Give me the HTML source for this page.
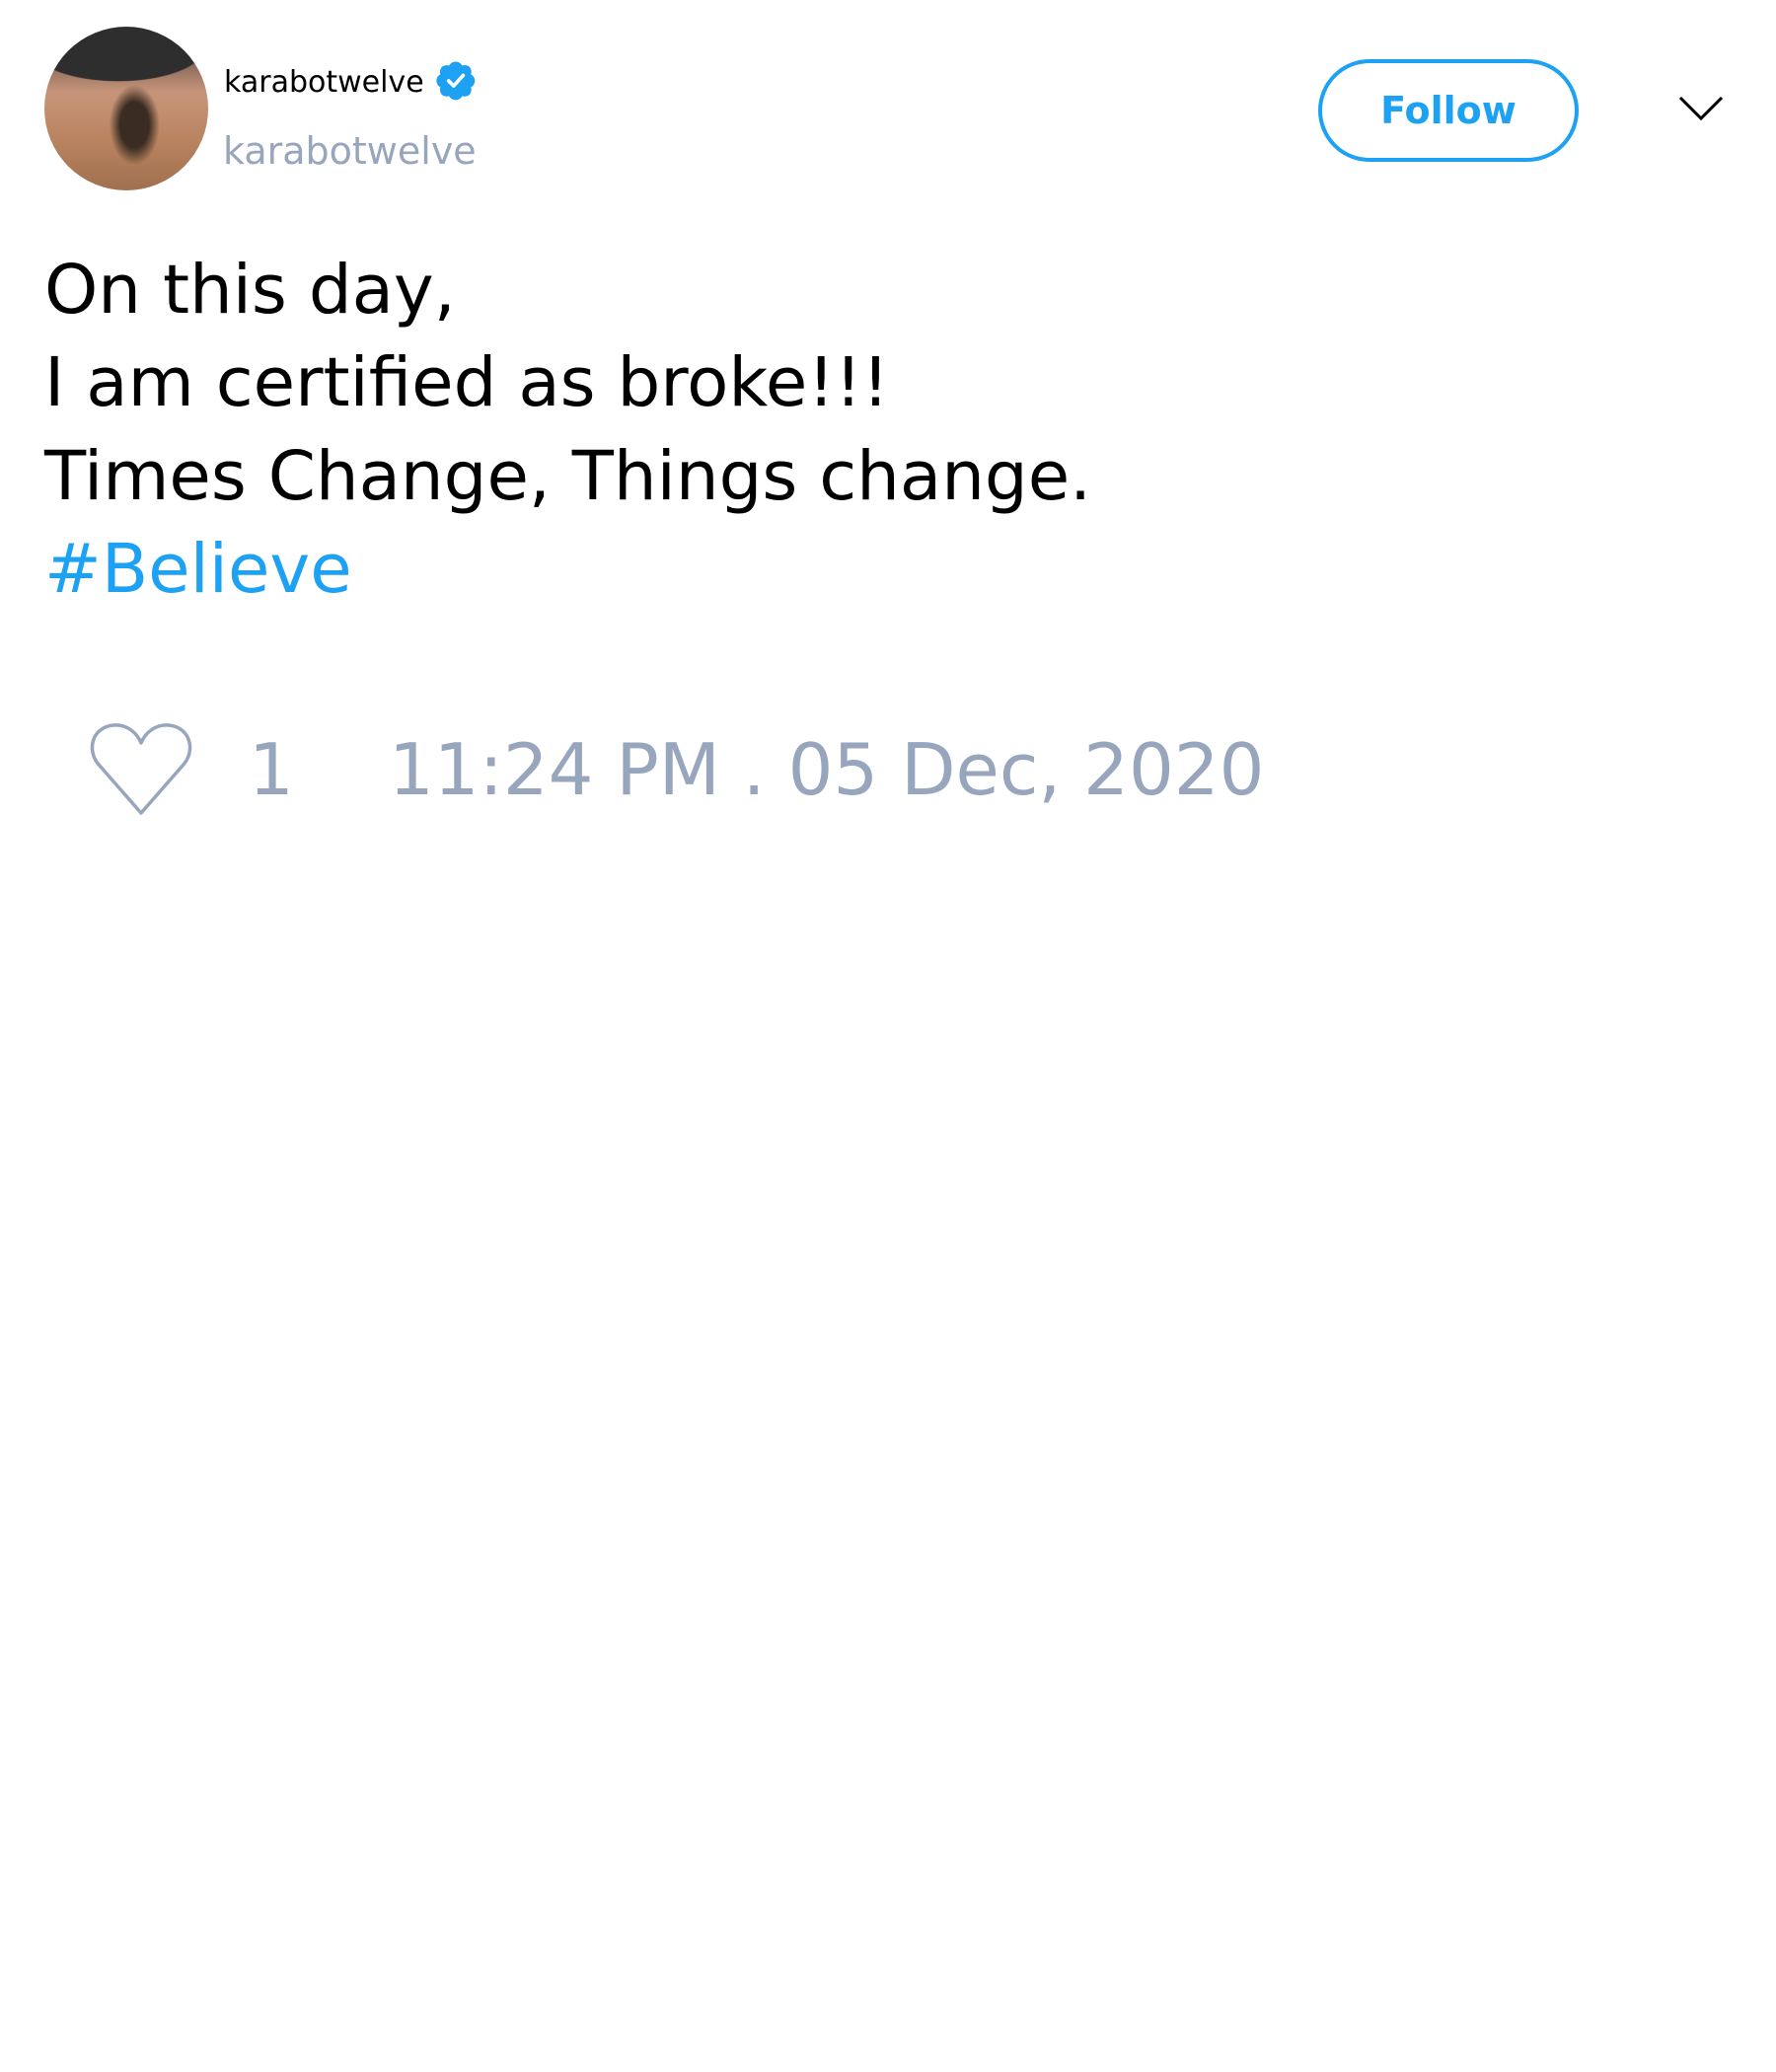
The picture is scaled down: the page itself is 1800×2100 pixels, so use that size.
<!DOCTYPE html>
<html><head><meta charset="utf-8"><style>
html,body{margin:0;padding:0;background:#fff;width:1800px;height:2100px;overflow:hidden;font-family:"DejaVu Sans","Liberation Sans",sans-serif;}
.a{position:absolute;white-space:nowrap;}
.av{position:absolute;left:45px;top:27px;width:166px;height:166px;border-radius:50%;overflow:hidden;
background:radial-gradient(ellipse 75% 30% at 45% 12%,#2e2e2e 70%,transparent 72%),
radial-gradient(ellipse 22% 35% at 55% 60%,#3a2c22 40%,transparent 70%),
linear-gradient(180deg,#3a3232 0%,#c7957a 40%,#b9835f 70%,#a0704f 100%);}
.t{font-size:69px;color:#000;left:45px;}
</style></head><body>
<div class="av"></div>
<div class="a" style="left:227px;top:64px;font-size:30px;color:#000;line-height:40px;">karabotwelve</div>
<svg class="a" style="left:440px;top:59px" width="44" height="44" viewBox="0 0 24 24"><path fill="#1da1f2" d="M22.5 12.5c0-1.58-.88-2.950-2.16-3.6.46-1.4.2-2.97-.81-4.03-1.06-1.01-2.63-1.27-4.03-.81C14.85 2.79 13.48 1.9 11.9 1.9S8.95 2.8 8.3 4.08c-1.4-.46-2.97-.2-4.030.81-1.01 1.06-1.27 2.63-.81 4.03C2.19 9.57 1.3 10.94 1.3 12.5s.89 2.93 2.17 3.58c-.46 1.4-.2 2.970.81 4.03 1.06 1.01 2.63 1.27 4.030.81.65 1.28 2.02 2.18 3.59 2.18s2.95-.89 3.6-2.17c1.4.46 2.97.2 4.03-.81 1.01-1.06 1.27-2.63.81-4.03 1.28-.65 2.16-2.02 2.16-3.59z"/><path fill="none" stroke="#fff" stroke-width="2" stroke-linecap="round" stroke-linejoin="round" d="M8 12.5l2.8 2.8L16 9.5"/></svg>
<div class="a" style="left:226px;top:128px;font-size:38px;color:#97a5bd;line-height:50px;">karabotwelve</div>
<div class="a" style="left:1336px;top:60px;width:256px;height:96px;border:4px solid #1da1f2;border-radius:52px;color:#1da1f2;font-weight:bold;font-size:38px;line-height:96px;text-align:center;">Follow</div>
<svg class="a" style="left:1700px;top:94px" width="48" height="32" viewBox="0 0 48 32"><path d="M3 5L24 26L45 5" fill="none" stroke="#000" stroke-width="3"/></svg>
<div class="a t" style="top:247px;line-height:94px;">On this day,</div>
<div class="a t" style="top:341px;line-height:94px;">I am certified as broke!!!</div>
<div class="a t" style="top:436px;line-height:94px;">Times Change, Things change.</div>
<div class="a t" style="top:530px;line-height:94px;color:#1da1f2;">#Believe</div>
<svg class="a" style="left:89px;top:731px" width="108" height="98" viewBox="0 0 108 98"><path d="M54 93L12 45C-2 30 4 6 26 4C40 3 50 12 54 22C58 12 68 3 82 4C104 6 110 30 96 45Z" fill="none" stroke="#97a5bd" stroke-width="3.5" stroke-linejoin="round"/></svg>
<div class="a" style="left:252px;top:733px;font-size:72px;color:#97a5bd;line-height:94px;">1</div>
<div class="a" style="left:394px;top:733px;font-size:72px;color:#97a5bd;line-height:94px;">11:24 PM . 05 Dec, 2020</div>
</body></html>
